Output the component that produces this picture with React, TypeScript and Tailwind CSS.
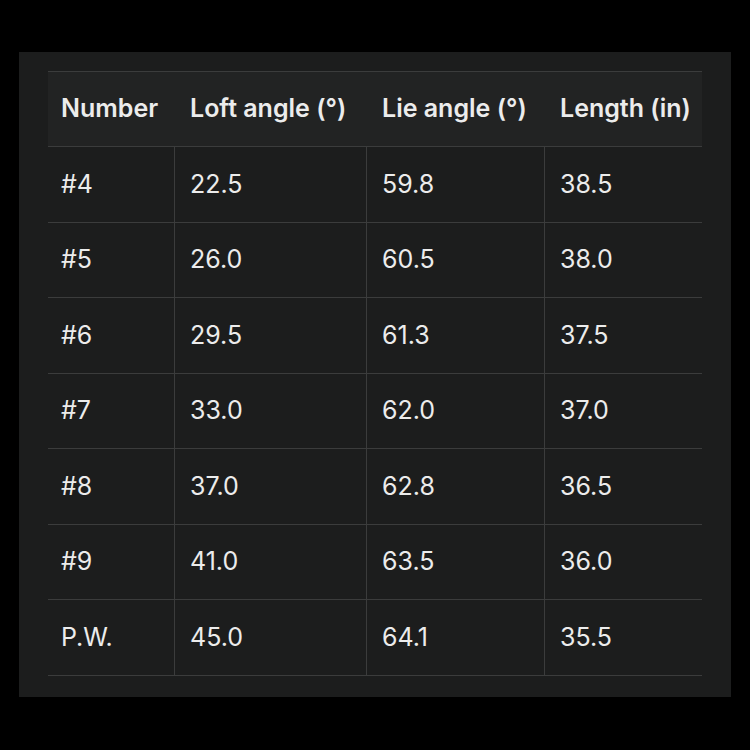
const headers = ['Number', 'Loft angle (°)', 'Lie angle (°)', 'Length (in)']

const rows = [
  ['#4', '22.5', '59.8', '38.5'],
  ['#5', '26.0', '60.5', '38.0'],
  ['#6', '29.5', '61.3', '37.5'],
  ['#7', '33.0', '62.0', '37.0'],
  ['#8', '37.0', '62.8', '36.5'],
  ['#9', '41.0', '63.5', '36.0'],
  ['P.W.', '45.0', '64.1', '35.5'],
]

const cols = 'grid grid-cols-[127px_192px_178px_157px]'

export default function App() {
  return (
    <div className="w-[750px] h-[750px] bg-black pt-[52px] pl-[19px]" style={{ fontFamily: 'Inter, Roboto, sans-serif' }}>
      <div className="w-[712px] h-[645px] bg-[#1c1d1d] pt-[19px] pl-[29px]">
        <div className="w-[654px] border-t border-[#3b3c3c] text-[25px] text-[#ececec]">
          <div className={`${cols} h-[75px] bg-[#222323] border-b border-[#3b3c3c] font-semibold`}>
            {headers.map((h, i) => (
              <div key={h} className={`flex items-center whitespace-nowrap ${i === 0 ? 'pl-[13px]' : 'pl-[15px]'}`}>
                {h}
              </div>
            ))}
          </div>
          {rows.map((r) => (
            <div key={r[0]} className={`${cols} h-[75.5px] border-b border-[#3b3c3c]`}>
              {r.map((c, i) => (
                <div
                  key={i}
                  className={`flex items-center ${i === 0 ? 'pl-[13px]' : 'pl-[15px]'} ${i < 3 ? 'border-r border-[#3b3c3c]' : ''}`}
                >
                  {c}
                </div>
              ))}
            </div>
          ))}
        </div>
      </div>
    </div>
  )
}
